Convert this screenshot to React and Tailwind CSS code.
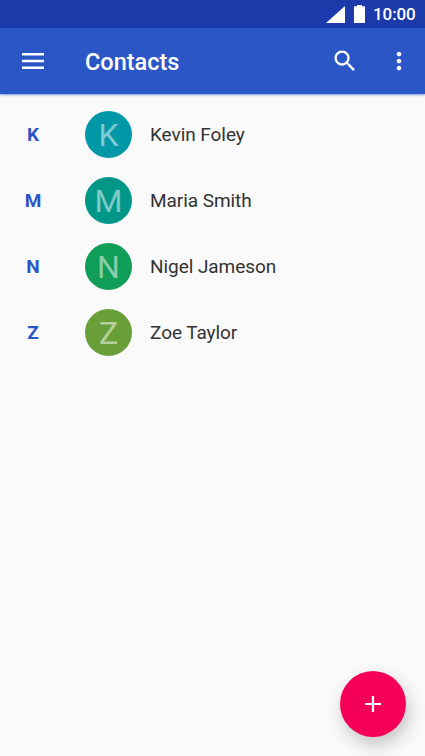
import React from "react";

const contacts = [
	{ letter: "K", name: "Kevin Foley", color: "bg-[#0097a7]" },
	{ letter: "M", name: "Maria Smith", color: "bg-[#009688]" },
	{ letter: "N", name: "Nigel Jameson", color: "bg-[#0f9d58]" },
	{ letter: "Z", name: "Zoe Taylor", color: "bg-[#689f38]" },
];

const StatusBar = () => (
	<div className="flex h-7 items-center justify-end bg-[#1c3aa9] pr-[9.5px] text-white">
		<svg className="h-[17px] w-[19px]" viewBox="0 0 19 17" fill="currentColor">
			<path d="M19 0v17H0z" />
		</svg>
		<svg className="ml-[9px] h-[18px] w-[11px]" viewBox="0 0 11 18" fill="currentColor">
			<path d="M3 0h5v1.2h3V18H0V1.2h3z" />
		</svg>
		<span className="ml-[8px] text-[17px] leading-7 font-medium tracking-[-0.15px]">10:00</span>
	</div>
);

const AppBar = () => (
	<header className="flex h-[66px] items-center bg-[#2a56c6] text-white shadow-[0_1px_2px_rgba(42,86,198,0.6)]">
		<button aria-label="Menu" className="ml-[22px]">
			<svg className="h-4 w-[22px]" viewBox="0 0 22 16" fill="currentColor">
				<path d="M0 0h22v2.4H0zM0 6.8h22v2.4H0zM0 13.6h22V16H0z" />
			</svg>
		</button>
		<h1 className="ml-[41px] flex-1 pt-[4px] text-[23.5px] font-medium">Contacts</h1>
		<button aria-label="Search">
			<svg className="size-7" viewBox="0 0 24 24" fill="currentColor">
				<path d="M15.5 14h-.79l-.28-.27C15.41 12.59 16 11.11 16 9.5 16 5.91 13.09 3 9.5 3S3 5.91 3 9.5 5.91 16 9.5 16c1.61 0 3.09-.59 4.23-1.57l.27.28v.79l5 4.99L20.49 19l-4.99-5zm-6 0C7.01 14 5 11.99 5 9.5S7.01 5 9.5 5 14 7.01 14 9.5 11.99 14 9.5 14z" />
			</svg>
		</button>
		<button aria-label="More options" className="mr-3 ml-[26px]">
			<svg className="size-7" viewBox="0 0 24 24" fill="currentColor">
				<path d="M12 8c1.1 0 2-.9 2-2s-.9-2-2-2-2 .9-2 2 .9 2 2 2zm0 2c-1.1 0-2 .9-2 2s.9 2 2 2 2-.9 2-2-.9-2-2-2zm0 6c-1.1 0-2 .9-2 2s.9 2 2 2 2-.9 2-2-.9-2-2-2z" />
			</svg>
		</button>
	</header>
);

const App = () => {
	return (
		<div className="relative h-[756px] w-[425px] overflow-hidden bg-[#fafafa] font-['Roboto',sans-serif]">
			<StatusBar />
			<AppBar />

			{/* Contact list */}
			<ul className="pt-[7.3px]">
				{contacts.map((contact) => (
					<li key={contact.letter} className="flex h-[66px] items-center">
						<span className="w-[66px] pt-0.5 text-center text-[19px] font-bold text-[#2a56c6]">
							{contact.letter}
						</span>
						<div
							className={`ml-[19px] flex size-[47px] items-center justify-center rounded-full pt-px text-[32px] leading-none text-white/50 ${contact.color}`}
						>
							{contact.letter}
						</div>
						<span className="ml-[18px] pt-0.5 text-[19px] tracking-[-0.06px] text-[#333333]">
							{contact.name}
						</span>
					</li>
				))}
			</ul>

			{/* Add contact */}
			<button
				aria-label="Add contact"
				className="absolute top-[671px] left-[340px] flex size-[66px] items-center justify-center rounded-full bg-[#f50057] text-white shadow-[3px_8px_18px_rgba(0,0,0,0.22)]"
			>
				<svg className="size-4" viewBox="0 0 16 16" fill="currentColor">
					<path d="M6.9 0h2.2v6.9H16v2.2H9.1V16H6.9V9.1H0V6.9h6.9z" />
				</svg>
			</button>
		</div>
	);
};

export default App;
